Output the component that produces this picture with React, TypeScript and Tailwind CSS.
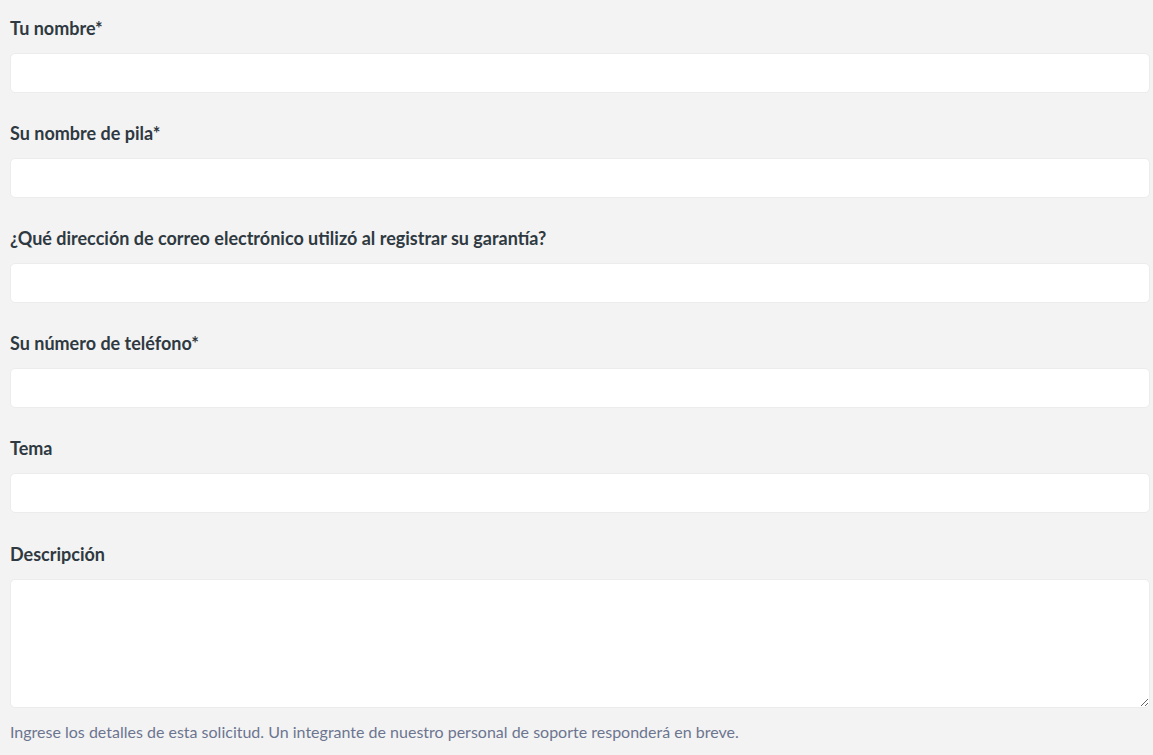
const fields = [
  { label: "Tu nombre*" },
  { label: "Su nombre de pila*" },
  { label: "¿Qué dirección de correo electrónico utilizó al registrar su garantía?" },
  { label: "Su número de teléfono*" },
  { label: "Tema" },
];

export default function App() {
  return (
    <div className="min-h-screen bg-[#f3f3f3] font-['Lato','Liberation_Sans',sans-serif] text-[#2f3941]">
      <form className="pl-[10px] pt-[15px] pr-[3px]">
        {fields.map((f) => (
          <div key={f.label} className="mb-[27px]">
            <label className="block text-[18px] font-bold leading-[26px] mb-[12px]">{f.label}</label>
            <input
              type="text"
              className="block w-full h-[40px] bg-white border border-[#ececec] rounded-[5px] px-3 outline-none"
            />
          </div>
        ))}
        <div className="pt-[1px]">
          <label className="block text-[18px] font-bold leading-[26px] mb-[12px]">Descripción</label>
          <textarea className="block w-full h-[129px] bg-white border border-[#ececec] rounded-[5px] px-3 outline-none" />
          <p className="mt-[12px] text-[16px] leading-[24px] text-[#6c7590]">
            Ingrese los detalles de esta solicitud. Un integrante de nuestro personal de soporte responderá en breve.
          </p>
        </div>
      </form>
    </div>
  );
}
